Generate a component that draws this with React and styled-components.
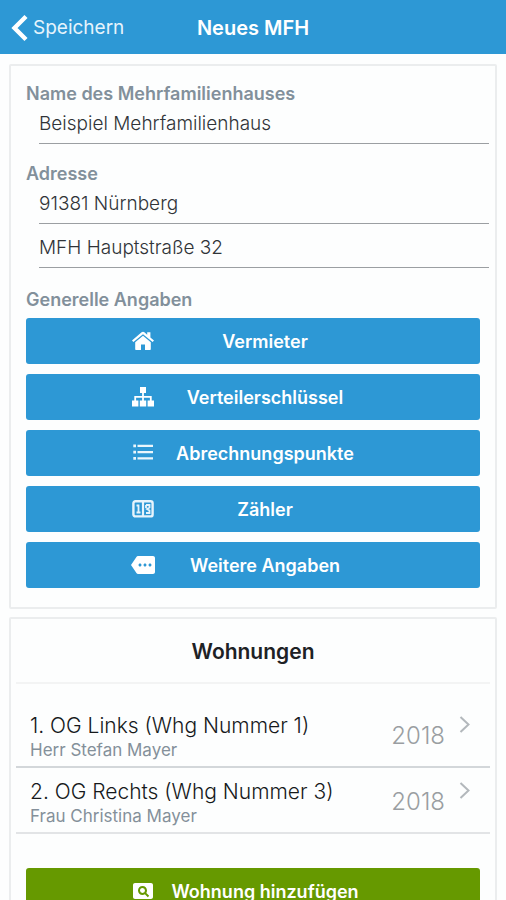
import React from "react";
import styled, { createGlobalStyle } from "styled-components";
import { MdMore, MdPageview } from "react-icons/md";

const GlobalStyle = createGlobalStyle`
  *, *::before, *::after { box-sizing: border-box; }
  body {
    margin: 0;
    background: #fdfefe;
    color: #1e2225;
    font-family: Inter, "Liberation Sans", sans-serif;
  }
  button, input { font: inherit; }
`;

const Header = styled.header`
  display: grid;
  grid-template-columns: 1fr auto 1fr;
  align-items: center;
  height: 54px;
  padding: 2px 10px 0;
  background: #2d98d5;
  color: #fff;
`;

const BackButton = styled.button`
  display: flex;
  align-items: center;
  justify-self: start;
  gap: 5px;
  padding: 0;
  border: 0;
  background: none;
  color: #e6f4fc;
  font-size: 19px;
  line-height: 24px;
  cursor: pointer;
`;

const PageTitle = styled.h1`
  margin: 0;
  font-size: 20px;
  line-height: 24px;
  font-weight: 600;
`;

const Main = styled.main`
  display: flex;
  flex-direction: column;
  gap: 8px;
  padding: 10px 9px;
`;

const Card = styled.section`
  padding: ${({ $top }) => $top}px 0 19px;
  border: 2px solid #ebedee;
  border-radius: 2px;
  background: #fdfefe;
`;

const Label = styled.label`
  display: block;
  margin-left: 15px;
  color: #82909b;
  font-size: 18px;
  line-height: 20px;
  font-weight: 600;
`;

const GroupLabel = styled(Label).attrs({ as: "h2" })`
  margin-top: 22px;
  margin-bottom: 0;
`;

const Fields = styled.div`
  display: flex;
  flex-direction: column;
  gap: 4px;
  margin: 0 6px ${({ $last }) => ($last ? 0 : 20)}px 28px;
`;

const TextField = styled.input`
  width: 100%;
  height: 40px;
  padding: 0;
  border: 0;
  border-bottom: 1px solid #9b9fa2;
  border-radius: 0;
  outline: 0;
  background: transparent;
  color: #303438;
  font-size: 19px;
  font-weight: 300;
`;

const ButtonStack = styled.div`
  display: flex;
  flex-direction: column;
  gap: 10px;
  margin: ${({ $top }) => $top}px 15px 0;
`;

const ActionButton = styled.button`
  display: flex;
  align-items: center;
  justify-content: center;
  width: 100%;
  height: 46px;
  padding: 0;
  border: 0;
  border-radius: 3px;
  background: ${({ $green }) => ($green ? "#669900" : "#2d98d5")};
  color: #fff;
  font-size: 18px;
  font-weight: 600;
  cursor: pointer;

  svg { flex: none; width: 24px; }
`;

const ActionText = styled.span`
  width: 220px;
  text-align: center;
`;

const SectionTitle = styled.h2`
  margin: 0 5px;
  padding-bottom: 17px;
  border-bottom: 2px solid #f3f4f4;
  font-size: 21px;
  line-height: 26px;
  font-weight: 600;
  text-align: center;
`;

const FlatList = styled.ul`
  margin: 18px 5px 34px;
  padding: 0;
  list-style: none;
`;

const FlatItem = styled.li`
  border-bottom: 2px solid #d3d7da;

  &:last-child { border-bottom-color: #e2e4e6; }
`;

const FlatLink = styled.a`
  display: flex;
  height: 64px;
  padding: 10px 20px 8px 14px;
  color: inherit;
  text-decoration: none;

  svg { margin-top: 3px; }
`;

const FlatInfo = styled.div`
  flex: 1;
`;

const FlatName = styled.div`
  color: #16191b;
  font-size: 21px;
  line-height: 28px;
  font-weight: 300;
  white-space: nowrap;
`;

const Tenant = styled.div`
  color: #84909a;
  font-size: 17px;
  line-height: 20px;
`;

const Year = styled.span`
  align-self: center;
  margin-right: 14px;
  color: #9a9ea2;
  font-size: 24px;
  font-weight: 300;
`;

const BackIcon = () => (
  <svg width="18" height="28" viewBox="0 0 18 28" fill="none" stroke="#fff" strokeWidth="4.4" aria-hidden="true">
    <path d="M16 2.5 4.5 14 16 25.5" />
  </svg>
);

const HomeIcon = () => (
  <svg width="24" height="20" viewBox="0 0 24 20" fill="#fff" aria-hidden="true">
    <path d="M12 4.8 4.2 11.2V18c0 .6.4 1 1 1H10v-5.5h4V19h4.8c.6 0 1-.4 1-1v-6.8z" />
    <path d="M23 9.4 19.4 6.4V1.3h-3.2v2.4L13.4 1.3c-.8-.7-2-.7-2.8 0L1 9.4l1.4 1.7L12 3.2l9.6 7.9z" />
  </svg>
);

const SitemapIcon = () => (
  <svg width="24" height="22" viewBox="0 0 24 22" fill="#fff" aria-hidden="true">
    <path d="M9 1h6v6H9zM1 14.5h6.4v6H1zM8.8 14.5h6.4v6H8.8zM16.6 14.5H23v6h-6.4z" />
    <path d="M12 6v9M4.2 15v-4.2h15.6V15" fill="none" stroke="#fff" strokeWidth="1.8" />
  </svg>
);

const ListIcon = () => (
  <svg width="24" height="20" viewBox="0 0 24 20" fill="#eaf6fc" aria-hidden="true">
    <path d="M6.5 1.8h15.5v2.3H6.5zM6.5 7.9h15.5v2.3H6.5zM6.5 14.3h15.5v2.3H6.5z" />
    <path d="M2.3 1.6h2.7v2.7H2.3zM2.3 7.7h2.7v2.7H2.3zM2.3 14.1h2.7v2.7H2.3z" />
  </svg>
);

const MeterIcon = () => (
  <svg width="24" height="20" viewBox="0 0 24 20" fill="none" stroke="#e6f4fc" aria-hidden="true">
    <rect x="2.4" y="2.2" width="19.2" height="15.2" rx="2" strokeWidth="2.4" />
    <path d="M12 3v14" strokeWidth="2.2" />
    <path d="M5.5 6.5h2v7M5.5 13.5h4" strokeWidth="1.8" />
    <path d="M15 6h3.5v2.5L16 10l2.5 1.5V14H15M15 6v3" strokeWidth="1.8" />
  </svg>
);

const ChevronIcon = () => (
  <svg width="11" height="19" viewBox="0 0 11 19" fill="none" stroke="#b3b8bc" strokeWidth="2" aria-hidden="true">
    <path d="m1.5 2 8 7.5-8 7.5" />
  </svg>
);

const actions = [
  { text: "Vermieter", icon: <HomeIcon /> },
  { text: "Verteilerschlüssel", icon: <SitemapIcon /> },
  { text: "Abrechnungspunkte", icon: <ListIcon /> },
  { text: "Zähler", icon: <MeterIcon /> },
  { text: "Weitere Angaben", icon: <MdMore size={24} /> },
];

const flats = [
  { name: "1. OG Links (Whg Nummer 1)", tenant: "Herr Stefan Mayer", year: "2018" },
  { name: "2. OG Rechts (Whg Nummer 3)", tenant: "Frau Christina Mayer", year: "2018" },
];

export default function App() {
  return (
    <>
      <GlobalStyle />
      <Header>
        <BackButton type="button"><BackIcon />Speichern</BackButton>
        <PageTitle>Neues MFH</PageTitle>
      </Header>
      <Main>
        <Card $top={18}>
          <Label htmlFor="name">Name des Mehrfamilienhauses</Label>
          <Fields>
            <TextField id="name" defaultValue="Beispiel Mehrfamilienhaus" />
          </Fields>
          <Label htmlFor="city">Adresse</Label>
          <Fields $last>
            <TextField id="city" defaultValue="91381 Nürnberg" />
            <TextField aria-label="Straße" defaultValue="MFH Hauptstraße 32" />
          </Fields>
          <GroupLabel>Generelle Angaben</GroupLabel>
          <ButtonStack $top={8}>
            {actions.map(({ text, icon }) => (
              <ActionButton type="button" key={text}>
                {icon}
                <ActionText>{text}</ActionText>
              </ActionButton>
            ))}
          </ButtonStack>
        </Card>
        <Card $top={20}>
          <SectionTitle>Wohnungen</SectionTitle>
          <FlatList>
            {flats.map((flat) => (
              <FlatItem key={flat.name}>
                <FlatLink href="#">
                  <FlatInfo>
                    <FlatName>{flat.name}</FlatName>
                    <Tenant>{flat.tenant}</Tenant>
                  </FlatInfo>
                  <Year>{flat.year}</Year>
                  <ChevronIcon />
                </FlatLink>
              </FlatItem>
            ))}
          </FlatList>
          <ButtonStack $top={0}>
            <ActionButton type="button" $green>
              <MdPageview size={24} />
              <ActionText>Wohnung hinzufügen</ActionText>
            </ActionButton>
          </ButtonStack>
        </Card>
      </Main>
    </>
  );
}
